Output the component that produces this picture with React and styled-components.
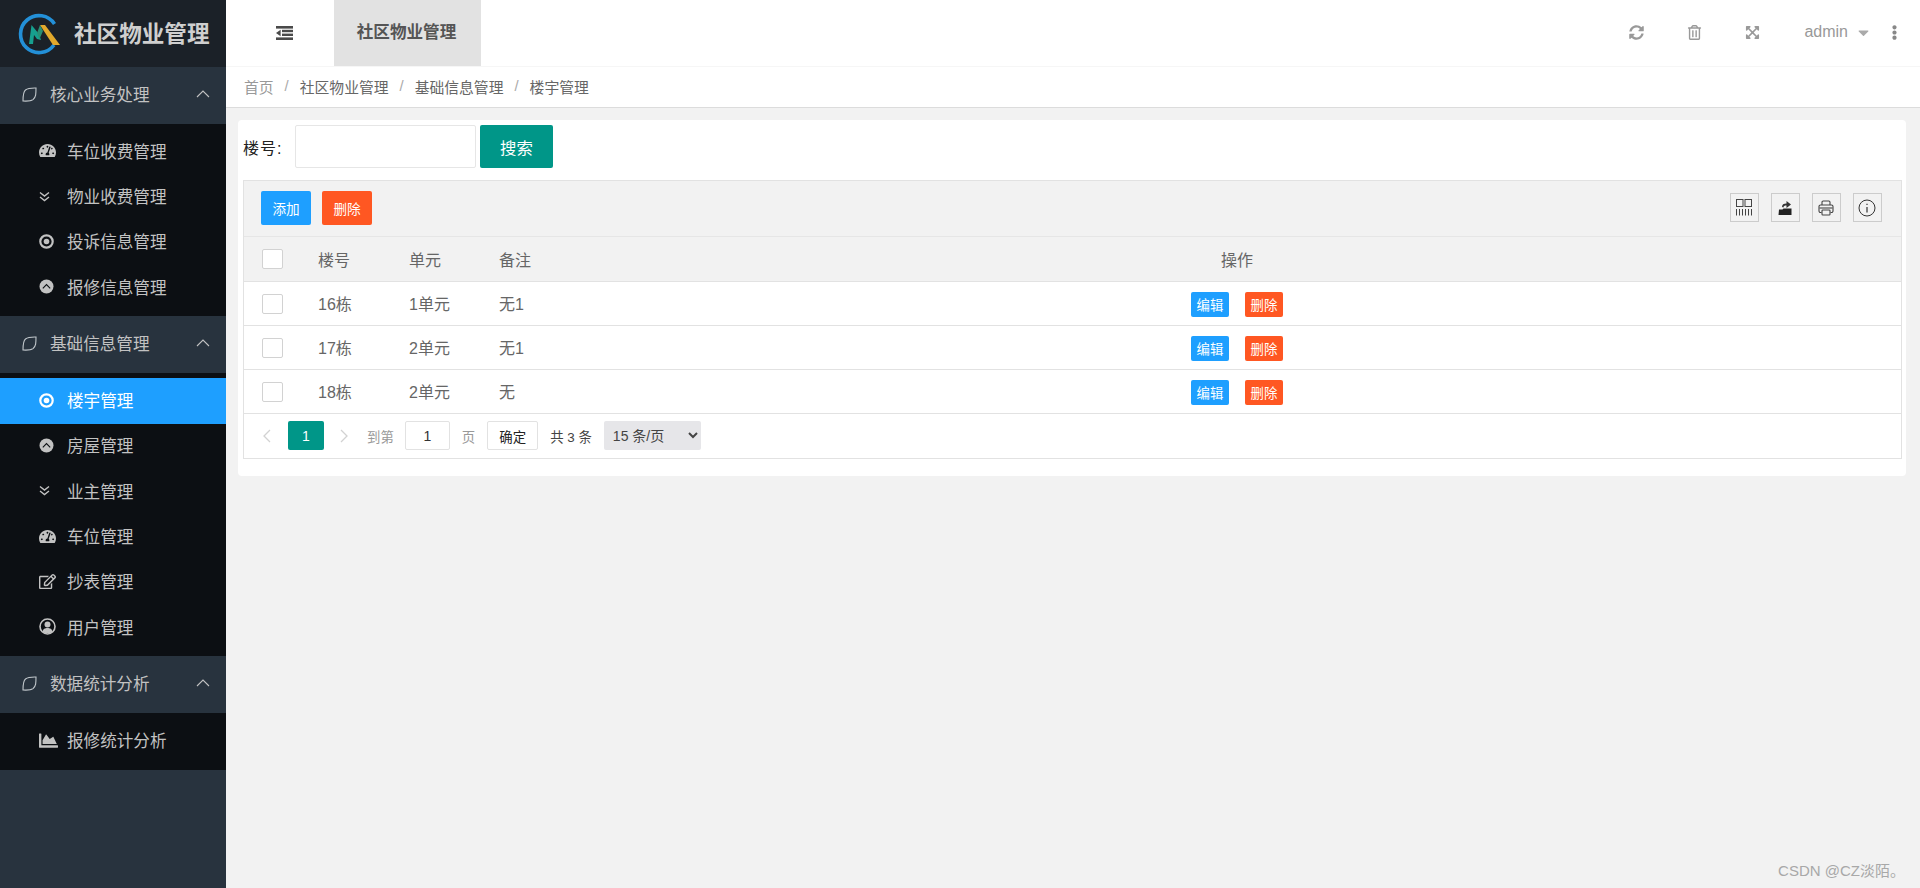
import React from 'react'
import styled, { createGlobalStyle } from 'styled-components'
import {
  FaTachometerAlt,
  FaRegEdit,
  FaChartArea,
  FaSyncAlt,
  FaRegTrashAlt,
  FaExpandArrowsAlt,
  FaEllipsisV,
  FaCaretDown,
} from 'react-icons/fa'

const GlobalStyle = createGlobalStyle`
  html, body { margin: 0; padding: 0; height: 100%; overflow: hidden; }
  body {
    font-family: "Liberation Sans", "Noto Sans CJK SC", sans-serif;
    background: #f2f2f2;
    color: #666;
  }
  * { box-sizing: border-box; }
`

const Layout = styled.div`
  display: flex;
  height: 888px;
  position: relative;
`

const Sidebar = styled.aside`
  width: 226px;
  flex-shrink: 0;
  background: #28333e;
  display: flex;
  flex-direction: column;
`

const LogoBar = styled.div`
  height: 67px;
  background: #1b2128;
  display: flex;
  align-items: center;
  padding-left: 17px;
  gap: 13px;
`

const LogoText = styled.span`
  font-size: 22.6px;
  font-weight: 700;
  color: #cfcfcf;
  white-space: nowrap;
  padding-bottom: 2px;
`

const GroupTitle = styled.div`
  height: 57px;
  display: flex;
  align-items: center;
  padding: 0 16px 3px 22px;
  font-size: 16.6px;
  color: #c2c2c2;
  background: #28333e;
`

const GroupLabel = styled.span`
  margin-left: 13px;
  flex: 1;
`

const SubMenu = styled.div`
  background: #0c0f13;
  padding: 5px 0 6px;
`

const MenuItem = styled.div`
  height: 45.35px;
  display: flex;
  align-items: center;
  padding: 0 0 2px 39px;
  font-size: 16.6px;
  color: ${(p) => (p.$active ? '#fff' : '#c2c2c2')};
  background: ${(p) => (p.$active ? '#1e9fff' : 'transparent')};
`

const MenuIcon = styled.span`
  width: 28px;
  display: flex;
  align-items: center;
  font-size: ${(p) => p.$size || 15}px;
`

const Main = styled.main`
  flex: 1;
  min-width: 0;
  display: flex;
  flex-direction: column;
`

const TopBar = styled.header`
  height: 67px;
  background: #fff;
  border-bottom: 1px solid #f6f6f6;
  display: flex;
  align-items: stretch;
`

const ToggleBtn = styled.div`
  width: 108px;
  display: flex;
  align-items: center;
  justify-content: center;
  padding-left: 8px;
  padding-bottom: 1px;
`

const ActiveTab = styled.div`
  width: 147px;
  background: #e2e2e2;
  display: flex;
  align-items: center;
  justify-content: center;
  padding: 0 2px 4px 0;
  font-size: 16.6px;
  font-weight: 700;
  color: #555;
`

const TopActions = styled.div`
  margin-left: auto;
  display: flex;
  align-items: center;
  color: #999;
  padding: 0 18px 2px 0;
`

const TopIcon = styled.span`
  width: 58px;
  display: flex;
  justify-content: center;
  font-size: 15px;
`

const AdminName = styled.span`
  margin-left: 23px;
  font-size: 16px;
  color: #999;
`

const AdminCaret = styled.span`
  display: flex;
  margin-left: 7px;
  font-size: 17px;
  color: #aaa;
`

const MoreIcon = styled.span`
  display: flex;
  margin-left: 15px;
  font-size: 15px;
  color: #888;
`

const Breadcrumb = styled.nav`
  height: 41px;
  background: #fff;
  border-bottom: 1px solid #dcdcdc;
  display: flex;
  align-items: center;
  padding: 0 0 2px 18px;
  font-size: 14.8px;
  color: #666;
`

const Crumb = styled.span`
  color: ${(p) => (p.$muted ? '#999' : '#666')};
`

const CrumbSep = styled.span`
  margin: 0 11px;
  color: #aaa;
`

const Card = styled.section`
  margin: 12px 14px 0 12px;
  height: 356px;
  background: #fff;
  border-radius: 4px;
  padding: 5px 4px 0 5px;
`

const SearchRow = styled.div`
  height: 43px;
  display: flex;
  align-items: center;
`

const SearchLabel = styled.label`
  width: 52px;
  font-size: 16px;
  letter-spacing: 1px;
  color: #222;
`

const SearchInput = styled.input`
  width: 181px;
  height: 43px;
  border: 1px solid #e6e6e6;
  border-radius: 2px;
  background: #fff;
  outline: none;
`

const SearchBtn = styled.button`
  width: 73px;
  height: 43px;
  margin-left: 4px;
  border: none;
  border-radius: 2px;
  background: #009688;
  color: #fff;
  font: inherit;
  font-size: 16.4px;
`

const TableBox = styled.div`
  margin-top: 12px;
  border: 1px solid #e2e2e2;
  height: 279px;
`

const Toolbar = styled.div`
  height: 56px;
  background: #f2f2f2;
  border-bottom: 1px solid #e6e6e6;
  display: flex;
  align-items: center;
  padding: 0 19px 2px 17px;
  gap: 11px;
`

const ToolBtn = styled.button`
  width: 50px;
  height: 34px;
  border: none;
  border-radius: 2px;
  background: ${(p) => (p.$danger ? '#ff5722' : '#1e9fff')};
  color: #fff;
  font: inherit;
  font-size: 13.6px;
  padding: 0;
`

const ToolIcons = styled.div`
  margin-left: auto;
  display: flex;
  gap: 11.5px;
`

const ToolIcon = styled.span`
  width: 29.5px;
  height: 29px;
  border: 1px solid #ccc;
  display: flex;
  align-items: center;
  justify-content: center;
`

const Grid = styled.table`
  width: 100%;
  table-layout: fixed;
  border-collapse: collapse;
  font-size: 16px;
  color: #666;
`

const HeadCell = styled.th`
  height: 44px;
  background: #f2f2f2;
  font-weight: 400;
  text-align: ${(p) => (p.$center ? 'center' : 'left')};
  padding: 0 ${(p) => (p.$box ? 18 : 15)}px;
  border-bottom: 1px solid #e2e2e2;
`

const BodyCell = styled.td`
  height: 44px;
  text-align: ${(p) => (p.$center ? 'center' : 'left')};
  padding: 0 ${(p) => (p.$box ? 18 : 15)}px;
  border-bottom: 1px solid #e2e2e2;
`

const CheckBox = styled.span`
  display: block;
  width: 21px;
  height: 20px;
  margin-top: 1px;
  background: #fff;
  border: 1px solid #d2d2d2;
  border-radius: 2px;
`

const RowBtn = styled.button`
  width: 38px;
  height: 25px;
  margin: 2px 8px 0;
  padding: 0;
  border: none;
  border-radius: 2px;
  background: ${(p) => (p.$danger ? '#ff5722' : '#1e9fff')};
  color: #fff;
  font: inherit;
  font-size: 13.4px;
  vertical-align: middle;
`

const Pager = styled.div`
  height: 44px;
  display: flex;
  align-items: center;
  padding-left: 17px;
  font-size: 13.4px;
  color: #999;
`

const PagerArrow = styled.span`
  display: flex;
  margin-left: ${(p) => p.$ml || 0}px;
`

const PageNum = styled.span`
  width: 36px;
  height: 29px;
  margin-left: 16px;
  background: #009688;
  color: #fff;
  border-radius: 2px;
  display: flex;
  align-items: center;
  justify-content: center;
  font-size: 14px;
`

const PagerText = styled.span`
  margin-left: ${(p) => p.$ml}px;
  color: ${(p) => (p.$dark ? '#444' : '#999')};
  font-size: 13.4px;
  white-space: nowrap;
`

const PageInput = styled.input`
  width: 45px;
  height: 29px;
  margin-left: 11px;
  border: 1px solid #e2e2e2;
  border-radius: 2px;
  text-align: center;
  font: inherit;
  font-size: 14px;
  color: #333;
  outline: none;
`

const PageOk = styled.button`
  width: 51px;
  height: 29px;
  margin-left: 12px;
  padding: 0;
  background: #fff;
  border: 1px solid #e2e2e2;
  border-radius: 2px;
  font: inherit;
  font-size: 13.4px;
  color: #222;
`

const PageSelect = styled.select`
  width: 97px;
  height: 29px;
  margin-left: 12px;
  padding-left: 5px;
  background: #e6e6e9;
  border: none;
  border-radius: 2px;
  font: inherit;
  font-size: 14px;
  color: #444;
  outline: none;
`

const Watermark = styled.div`
  position: absolute;
  right: 15px;
  bottom: 8px;
  font-size: 15px;
  color: #a8a8a8;
`

const LogoMark = () => (
  <svg width="44" height="44" viewBox="0 0 44 44">
    <path d="M37 33 A18.5 18.5 0 1 1 37.5 12" fill="none" stroke="#2390d8" strokeWidth="3.6" />
    <path d="M12 32 L14.5 13 L22 22 L24 28 L20 27 L17 23 L16 32 Z" fill="#17a08f" />
    <path d="M23 13 L28 13 L43 33 L36 33 Z" fill="#e2a92c" />
    <path d="M23 13 L26 19 L22.5 27 L20 21 Z" fill="#2a8f74" />
  </svg>
)

const GroupIcon = () => (
  <svg width="15" height="15" viewBox="0 0 15 15" fill="none" stroke="#c2c8cc" strokeWidth="1.1">
    <path d="M14 1 C 14 7 14 10 11 12.6 C 9 14 4 14.2 1 14 C 1 10 1 5 3.5 3 C 6 1 10 0.9 14 1 Z" />
  </svg>
)

const ChevronUp = () => (
  <svg width="14" height="8" viewBox="0 0 14 8" fill="none" stroke="#c2c2c2" strokeWidth="1.1">
    <path d="M1 7 L7 1 L13 7" />
  </svg>
)

const DoubleDown = () => (
  <svg width="11" height="11" viewBox="0 0 11 11" fill="none" stroke="currentColor" strokeWidth="1.4">
    <path d="M1 1.5 L5.5 5 L10 1.5" />
    <path d="M1 6 L5.5 9.5 L10 6" />
  </svg>
)

const DotCircle = () => (
  <svg width="15" height="15" viewBox="0 0 15 15">
    <circle cx="7.5" cy="7.5" r="6.2" fill="none" stroke="currentColor" strokeWidth="2.2" />
    <circle cx="7.5" cy="7.5" r="2.8" fill="currentColor" />
  </svg>
)

const CircleUp = () => (
  <svg width="15" height="15" viewBox="0 0 15 15">
    <circle cx="7.5" cy="7.5" r="7" fill="currentColor" />
    <path d="M3.8 9.3 L7.5 5.6 L11.2 9.3" fill="none" stroke="#0c0f13" strokeWidth="1.1" />
  </svg>
)

const UserRing = () => (
  <svg width="17" height="17" viewBox="0 0 17 17">
    <circle cx="8.5" cy="8.5" r="7.5" fill="none" stroke="currentColor" strokeWidth="1.6" />
    <circle cx="8.5" cy="6.6" r="3" fill="currentColor" />
    <path d="M3.5 14 C4 10.8 6 10 8.5 10 C11 10 13 10.8 13.5 14 C11.5 15.8 5.5 15.8 3.5 14 Z" fill="currentColor" />
  </svg>
)

const OutdentBars = () => (
  <svg width="17" height="14" viewBox="0 0 17 14" fill="#4a4a4a">
    <rect x="0" y="0" width="17" height="2.6" />
    <rect x="6" y="3.8" width="11" height="2.4" />
    <rect x="6" y="7.6" width="11" height="2.4" />
    <rect x="0" y="11.4" width="17" height="2.6" />
    <path d="M4.6 3.8 V10.2 L0 7 Z" />
  </svg>
)

const ColsIcon = () => (
  <svg width="16" height="17" viewBox="0 0 16 17" fill="none" stroke="#444" strokeWidth="1">
    <rect x="0.5" y="0.5" width="6.5" height="7" />
    <rect x="9" y="0.5" width="6.5" height="7" />
    <path d="M0.5 10 V16.5 M3.5 10 V16.5 M6.5 10 V16.5 M9.5 10 V16.5 M12.5 10 V16.5 M15.5 10 V16.5" />
  </svg>
)

const ExportIcon = () => (
  <svg width="15" height="15" viewBox="0 0 15 15">
    <path d="M4 7 C4 4.5 5.5 3.5 8.5 3.5 V1 L13 4.5 L8.5 8 V5.5 C6.5 5.5 5.5 6 5.5 7.5 Z" fill="#333" />
    <path d="M0.5 15 L1 9.5 H4.5 L5.5 8.5 H13.5 V15 Z" fill="#222" />
  </svg>
)

const PrintIcon = () => (
  <svg width="16" height="16" viewBox="0 0 16 16" fill="none" stroke="#444" strokeWidth="1.1">
    <path d="M4 5 V2.2 A1.2 1.2 0 0 1 5.2 1 H10.8 A1.2 1.2 0 0 1 12 2.2 V5" />
    <path d="M3.5 12.5 H2.5 A1.5 1.5 0 0 1 1 11 V6.5 A1.5 1.5 0 0 1 2.5 5 H13.5 A1.5 1.5 0 0 1 15 6.5 V11 A1.5 1.5 0 0 1 13.5 12.5 H12.5" />
    <path d="M1.5 8 H14.5" />
    <rect x="4" y="10" width="8" height="5" rx="0.8" />
  </svg>
)

const InfoIcon = () => (
  <svg width="18" height="18" viewBox="0 0 18 18" fill="none" stroke="#333" strokeWidth="1">
    <circle cx="9" cy="9" r="8" />
    <path d="M9 8 V13.5" strokeWidth="1.2" />
    <path d="M9 4.8 V6" strokeWidth="1.2" />
  </svg>
)

const Arrow = ({ left }) => (
  <svg width="11" height="14" viewBox="0 0 11 14" fill="none" stroke="#d2d2d2" strokeWidth="1.3">
    <path d={left ? 'M9 1 L3 7 L9 13' : 'M2 1 L8 7 L2 13'} />
  </svg>
)

const menu = [
  {
    title: '核心业务处理',
    items: [
      { label: '车位收费管理', Icon: FaTachometerAlt, size: 17 },
      { label: '物业收费管理', Icon: DoubleDown },
      { label: '投诉信息管理', Icon: DotCircle },
      { label: '报修信息管理', Icon: CircleUp },
    ],
  },
  {
    title: '基础信息管理',
    items: [
      { label: '楼宇管理', Icon: DotCircle, active: true },
      { label: '房屋管理', Icon: CircleUp },
      { label: '业主管理', Icon: DoubleDown },
      { label: '车位管理', Icon: FaTachometerAlt, size: 17 },
      { label: '抄表管理', Icon: FaRegEdit, size: 17 },
      { label: '用户管理', Icon: UserRing },
    ],
  },
  {
    title: '数据统计分析',
    items: [{ label: '报修统计分析', Icon: FaChartArea, size: 19 }],
  },
]

const rows = [
  { id: 1, no: '16栋', unit: '1单元', note: '无1' },
  { id: 2, no: '17栋', unit: '2单元', note: '无1' },
  { id: 3, no: '18栋', unit: '2单元', note: '无' },
]

export default function App() {
  return (
    <Layout>
      <GlobalStyle />
      <Sidebar>
        <LogoBar>
          <LogoMark />
          <LogoText>社区物业管理</LogoText>
        </LogoBar>
        {menu.map((group) => (
          <div key={group.title}>
            <GroupTitle>
              <GroupIcon />
              <GroupLabel>{group.title}</GroupLabel>
              <ChevronUp />
            </GroupTitle>
            <SubMenu>
              {group.items.map(({ label, Icon, size, active }) => (
                <MenuItem key={label} $active={active}>
                  <MenuIcon $size={size}>
                    <Icon />
                  </MenuIcon>
                  {label}
                </MenuItem>
              ))}
            </SubMenu>
          </div>
        ))}
      </Sidebar>

      <Main>
        <TopBar>
          <ToggleBtn>
            <OutdentBars />
          </ToggleBtn>
          <ActiveTab>社区物业管理</ActiveTab>
          <TopActions>
            <TopIcon>
              <FaSyncAlt />
            </TopIcon>
            <TopIcon>
              <FaRegTrashAlt />
            </TopIcon>
            <TopIcon>
              <FaExpandArrowsAlt />
            </TopIcon>
            <AdminName>admin</AdminName>
            <AdminCaret>
              <FaCaretDown />
            </AdminCaret>
            <MoreIcon>
              <FaEllipsisV />
            </MoreIcon>
          </TopActions>
        </TopBar>

        <Breadcrumb>
          <Crumb $muted>首页</Crumb>
          <CrumbSep>/</CrumbSep>
          <Crumb>社区物业管理</Crumb>
          <CrumbSep>/</CrumbSep>
          <Crumb>基础信息管理</Crumb>
          <CrumbSep>/</CrumbSep>
          <Crumb>楼宇管理</Crumb>
        </Breadcrumb>

        <Card>
          <SearchRow>
            <SearchLabel>楼号:</SearchLabel>
            <SearchInput />
            <SearchBtn>搜索</SearchBtn>
          </SearchRow>

          <TableBox>
            <Toolbar>
              <ToolBtn>添加</ToolBtn>
              <ToolBtn $danger>删除</ToolBtn>
              <ToolIcons>
                <ToolIcon>
                  <ColsIcon />
                </ToolIcon>
                <ToolIcon>
                  <ExportIcon />
                </ToolIcon>
                <ToolIcon>
                  <PrintIcon />
                </ToolIcon>
                <ToolIcon>
                  <InfoIcon />
                </ToolIcon>
              </ToolIcons>
            </Toolbar>
            <Grid>
              <colgroup>
                <col width="59" />
                <col width="91" />
                <col width="90" />
                <col width="89" />
                <col />
              </colgroup>
              <thead>
                <tr>
                  <HeadCell $box>
                    <CheckBox />
                  </HeadCell>
                  <HeadCell>楼号</HeadCell>
                  <HeadCell>单元</HeadCell>
                  <HeadCell>备注</HeadCell>
                  <HeadCell $center>操作</HeadCell>
                </tr>
              </thead>
              <tbody>
                {rows.map((row) => (
                  <tr key={row.id}>
                    <BodyCell $box>
                      <CheckBox />
                    </BodyCell>
                    <BodyCell>{row.no}</BodyCell>
                    <BodyCell>{row.unit}</BodyCell>
                    <BodyCell>{row.note}</BodyCell>
                    <BodyCell $center>
                      <RowBtn>编辑</RowBtn>
                      <RowBtn $danger>删除</RowBtn>
                    </BodyCell>
                  </tr>
                ))}
              </tbody>
            </Grid>
            <Pager>
              <PagerArrow>
                <Arrow left />
              </PagerArrow>
              <PageNum>1</PageNum>
              <PagerArrow $ml={15}>
                <Arrow />
              </PagerArrow>
              <PagerText $ml={17}>到第</PagerText>
              <PageInput defaultValue="1" />
              <PagerText $ml={12}>页</PagerText>
              <PageOk>确定</PageOk>
              <PagerText $ml={12} $dark>
                共 3 条
              </PagerText>
              <PageSelect defaultValue="15">
                <option value="15">15 条/页</option>
                <option value="30">30 条/页</option>
              </PageSelect>
            </Pager>
          </TableBox>
        </Card>
      </Main>
      <Watermark>CSDN @CZ淡陌。</Watermark>
    </Layout>
  )
}
